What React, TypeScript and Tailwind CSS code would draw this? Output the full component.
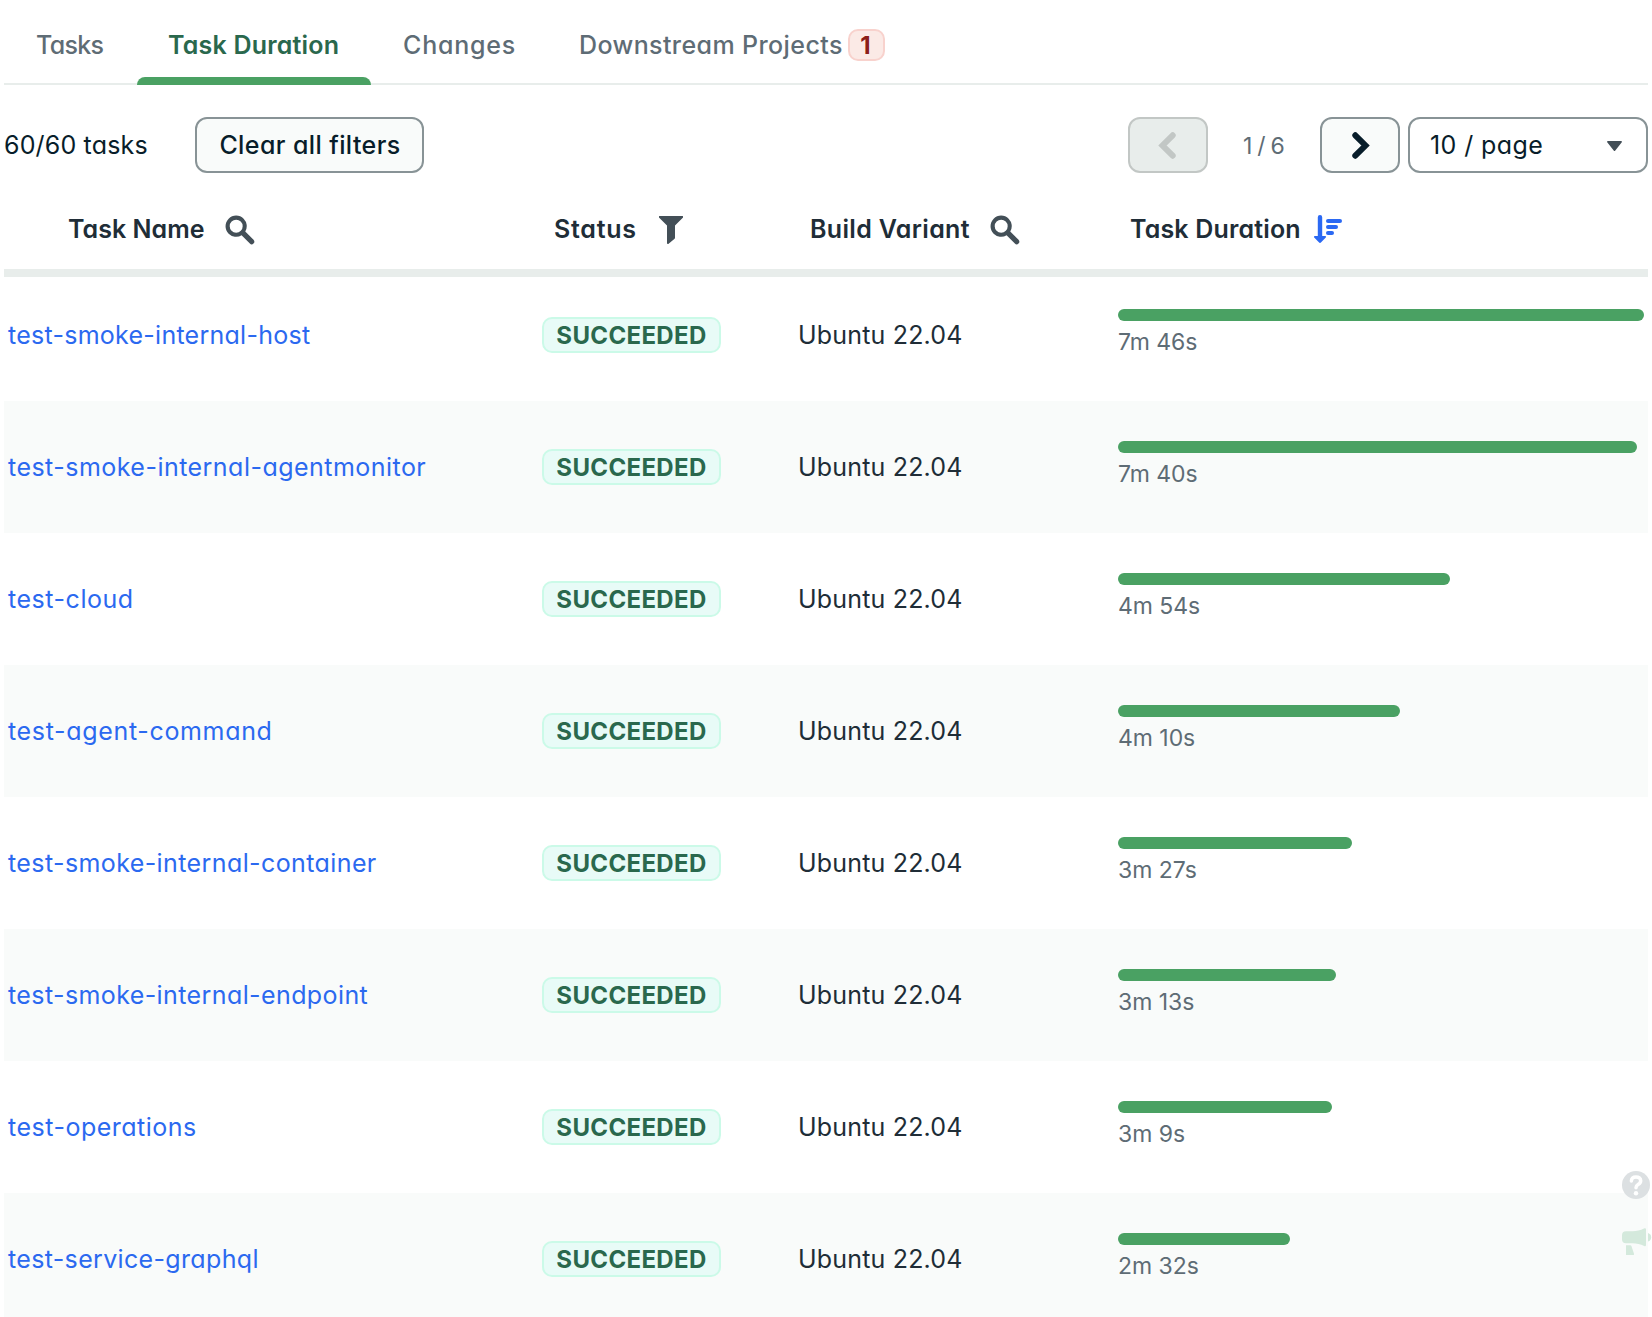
import React from "react";

type Task = { name: string; seconds: number; duration: string; tracking: string };

const MAX_SECONDS = 466;

const tasks: Task[] = [
  { name: "test-smoke-internal-host", seconds: 466, duration: "7m 46s", tracking: "tracking-[0.26px]" },
  { name: "test-smoke-internal-agentmonitor", seconds: 460, duration: "7m 40s", tracking: "tracking-[0.47px]" },
  { name: "test-cloud", seconds: 294, duration: "4m 54s", tracking: "tracking-[0.54px]" },
  { name: "test-agent-command", seconds: 250, duration: "4m 10s", tracking: "tracking-[0.67px]" },
  { name: "test-smoke-internal-container", seconds: 207, duration: "3m 27s", tracking: "tracking-[0.4px]" },
  { name: "test-smoke-internal-endpoint", seconds: 193, duration: "3m 13s", tracking: "tracking-[0.4px]" },
  { name: "test-operations", seconds: 189.8, duration: "3m 9s", tracking: "tracking-[0.5px]" },
  { name: "test-service-graphql", seconds: 152, duration: "2m 32s", tracking: "tracking-[0.34px]" },
];

function SearchIcon() {
  return (
    <svg className="mt-0.5 size-8 shrink-0 text-[#434F57]" viewBox="0 0 16 16" fill="currentColor">
      <path
        fillRule="evenodd"
        clipRule="evenodd"
        d="M2.323 9.819a5.302 5.302 0 0 0 6.463.805l4.144 4.144a1.3 1.3 0 0 0 1.838-1.838l-4.144-4.144a5.302 5.302 0 0 0-.805-6.463 5.3 5.3 0 0 0-7.496 7.496zM8.364 3.778a3.243 3.243 0 1 1-4.586 4.586 3.243 3.243 0 0 1 4.586-4.586z"
      />
    </svg>
  );
}

function FilterIcon() {
  return (
    <svg className="mt-0.5 h-7 w-6 shrink-0 text-[#434F57]" viewBox="0 0 24 28" fill="currentColor">
      <path d="M1 0h22a1 1 0 0 1 .8 1.8L16 9.6v12.2a1.6 1.6 0 0 1-.7 1.3L9.6 27.8A1 1 0 0 1 8 27V9.6L.2 1.8A1 1 0 0 1 1 0z" />
    </svg>
  );
}

function SortDescendingIcon() {
  return (
    <svg className="h-7 w-7 shrink-0 text-[#2B69F3]" viewBox="0 0 28 28" fill="currentColor">
      <path d="M3.8 2.2a2.2 2.2 0 0 1 4.4 0V21h3a.8.8 0 0 1 .6 1.4l-4.9 5.1a1.2 1.2 0 0 1-1.8 0L.2 22.4A.8.8 0 0 1 .8 21h3z" />
      <rect x="12" y="4" width="16" height="4" rx="2" />
      <rect x="12" y="10" width="12" height="4" rx="2" />
      <rect x="12" y="16" width="8" height="4" rx="2" />
    </svg>
  );
}

function ChevronRight() {
  return (
    <svg className="h-[27px] w-[18px]" viewBox="0 0 18 27" fill="none" stroke="currentColor" strokeWidth="6" strokeLinecap="round">
      <path d="M3.3 3.3 13.5 13.5 3.3 23.7" />
    </svg>
  );
}

function ChevronLeft() {
  return (
    <svg className="h-[27px] w-[18px]" viewBox="0 0 18 27" fill="none" stroke="currentColor" strokeWidth="6" strokeLinecap="round">
      <path d="M14.7 3.3 4.5 13.5 14.7 23.7" />
    </svg>
  );
}

function HelpIcon() {
  return (
    <svg className="size-7" viewBox="0 0 28 28">
      <circle cx="14" cy="14" r="14" fill="#DCE0E2" />
      <path d="M9.400 10C9.500 7.300 11.400 5.900 14 5.900c2.700 0 4.700 1.500 4.700 3.900 0 1.900-1.100 2.900-2.600 3.800-1.500.9-2.100 1.500-2.100 3.200" fill="none" stroke="#fff" strokeWidth="3.500" strokeLinecap="round" />
      <circle cx="14" cy="22.200" r="2.200" fill="#fff" />
    </svg>
  );
}

function MegaphoneIcon() {
  return (
    <svg className="h-[27px] w-[30px]" viewBox="0 0 30 27" fill="#D4E9DC">
      <path d="M4 3.2h6.5c4 0 8-1 11.500-2.800a1.300 1.300 0 0 1 2 1.100v15.400a1.300 1.300 0 0 1-1.800 1.100C18.500 16.200 14.500 15.300 10.500 15.300H4a4 4 0 0 1-4-4V7.200a4 4 0 0 1 4-4z" />
      <path d="M26 5a4.500 4.500 0 0 1 0 8.600z" />
      <path d="M4 17.300h4.200c.7 0 1.100.300 1.300.900L12 25.700c.300.800-.200 1.300-1 1.300H4z" />
    </svg>
  );
}

export default function App() {
  return (
    <div className="relative h-[1317px] w-[1652px] overflow-hidden bg-white px-1 pt-[5px] font-['Inter',sans-serif] text-[25px] whitespace-nowrap [font-feature-settings:'cv11']">
      <nav className="flex h-20 border-b-2 border-[#E8EDEB] font-medium text-[#5E6C75]">
        <button className="flex w-[133px] items-center pt-1 pl-8">
          <span className="tracking-[-0.668px]">Tasks</span>
        </button>
        <button className="relative flex w-[234px] items-center pt-1 pl-[31px] font-semibold text-[#2A684D]">
          <span className="tracking-[0.2px]">Task Duration</span>
          <span className="absolute inset-x-0 -bottom-0.5 h-2 rounded-t-lg bg-[#4AA163]" />
        </button>
        <button className="flex w-44 items-center pt-1 pl-8">
          <span className="tracking-[0.8px]">Changes</span>
        </button>
        <button className="flex items-center pl-8">
          <span className="w-[269px] pt-1 text-left tracking-[0.4px]">Downstream Projects</span>
          <span className="mt-0.5 flex h-8 w-[37px] items-center justify-center rounded-[10px] border-2 border-[#F8D2CD] bg-[#FBEAE6] pt-0.5 pr-0.5 text-2xl font-bold text-[#8B2018]">
            1
          </span>
        </button>
      </nav>

      <div className="mt-8 flex h-14 items-center text-[#081D2A]">
        <span className="w-[191px] pt-0.5 tracking-[0.17px]">60/60 tasks</span>
        <button className="flex h-14 w-[229px] items-center justify-center rounded-xl border-2 border-[#889396] bg-[#F9FBFA] pt-0.5 pl-px font-medium tracking-[0.4px]">
          Clear all filters
        </button>
        <div className="ml-auto flex items-center">
          <button className="flex h-14 w-20 items-center justify-center rounded-xl border-2 border-[#C2C7C5] bg-[#E8EDEB] pr-0.5 text-[#C2C7C5]">
            <ChevronLeft />
          </button>
          <span className="w-28 pt-0.5 pl-[35px] text-[23px] tracking-[-0.745px] text-[#5E6C75]">1 / 6</span>
          <button className="flex h-14 w-20 items-center justify-center rounded-xl border-2 border-[#889396] bg-[#F9FBFA] pl-0.5">
            <ChevronRight />
          </button>
          <button className="ml-2 flex h-14 w-60 items-center justify-between rounded-xl border-2 border-[#889396] bg-white pr-6 pl-5">
            <span className="pt-0.5 tracking-[0.4px]">10 / page</span>
            <svg className="mt-0.5 h-2.5 w-[15px] text-[#434F57]" viewBox="0 0 15 10" fill="currentColor">
              <path d="M.8 0h13.400a.8.800 0 0 1 .6 1.300L8.300 9.600a1 1 0 0 1-1.600 0L.2 1.300A.8.800 0 0 1 .8 0z" />
            </svg>
          </button>
        </div>
      </div>

      <div className="mt-4 grid h-20 grid-cols-[534px_256px_320px_534px] items-center font-semibold text-[#202D37]">
        <div className="flex items-center pl-16">
          <span className="w-[156px] pt-0.5 tracking-[0.03px]">Task Name</span>
          <SearchIcon />
        </div>
        <div className="flex items-center pl-4">
          <span className="w-[105px] pt-0.5 tracking-[0.75px]">Status</span>
          <FilterIcon />
        </div>
        <div className="flex items-center pl-4">
          <span className="w-[179px] pt-0.5 tracking-[0.33px]">Build Variant</span>
          <SearchIcon />
        </div>
        <div className="flex items-center pl-4">
          <span className="w-[184px] pt-0.5 tracking-[0.16px]">Task Duration</span>
          <SortDescendingIcon />
        </div>
      </div>

      <div className="flex flex-col">
        {tasks.map((task) => (
          <div
            key={task.name}
            className="grid h-[132px] grid-cols-[534px_256px_320px_534px] items-center first:shadow-[inset_0_8px_0_#E8EDEB] even:bg-[#F9FBFA]"
          >
            <a className={`pt-0.5 pl-1 text-[#2B69F0] ${task.tracking}`}>{task.name}</a>
            <div className="pl-1">
              <span className="flex h-9 w-[179px] items-center justify-center rounded-[10px] border-2 border-[#CBFAE8] bg-[#E8FBF7] pt-0.5 text-2xl font-bold tracking-[0.35px] text-[#2A684D]">
                SUCCEEDED
              </span>
            </div>
            <span className="pt-0.5 pl-1 tracking-[0.18px] text-[#202D37]">Ubuntu 22.04</span>
            <div className="h-full px-1 pt-10">
              <div className="h-3 rounded-full bg-[#4AA163]" style={{ width: `${(task.seconds / MAX_SECONDS) * 100}%` }} />
              <div className="text-[23px] leading-[43px] tracking-[-0.05px] text-[#5E6C75]">{task.duration}</div>
            </div>
          </div>
        ))}
      </div>

      <div className="absolute top-[1171px] left-[1622px] flex flex-col gap-[29px]">
        <HelpIcon />
        <MegaphoneIcon />
      </div>
    </div>
  );
}
